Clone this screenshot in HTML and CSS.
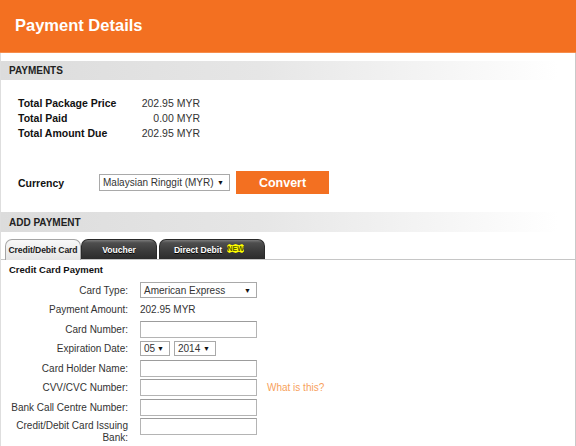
FILE: index.html
```html
<!DOCTYPE html>
<html>
<head>
<meta charset="utf-8">
<title>Payment Details</title>
<link rel="stylesheet" href="styles.css">
</head>
<body>
<div class="page">
  <header class="hdr"><h1>Payment Details</h1></header>
  <div class="main">
    <div class="bar">PAYMENTS</div>
    <div class="totals">
      <div class="trow"><span class="tl">Total Package Price</span><span class="tv">202.95 MYR</span></div>
      <div class="trow"><span class="tl">Total Paid</span><span class="tv">0.00 MYR</span></div>
      <div class="trow"><span class="tl">Total Amount Due</span><span class="tv">202.95 MYR</span></div>
    </div>
    <div class="currency">
      <span class="cl">Currency</span>
      <div class="sel sel-cur"><span>Malaysian Ringgit (MYR)</span><span class="arr">&#9660;</span></div>
      <button class="convert">Convert</button>
    </div>
    <div class="bar bar-add">ADD PAYMENT</div>
    <div class="tabs">
      <div class="tab tab-active">Credit/Debit Card</div>
      <div class="tab tab-dark tab-voucher">Voucher</div>
      <div class="tab tab-dark tab-dd">Direct Debit <span class="new">NEW</span></div>
    </div>
    <div class="ccp">Credit Card Payment</div>
    <div class="form">
      <div class="lbl">Card Type:</div>
      <div class="sel sel-type"><span>American Express</span><span class="arr">&#9660;</span></div>
      <div></div>

      <div class="lbl">Payment Amount:</div>
      <div class="val">202.95 MYR</div>
      <div></div>

      <div class="lbl">Card Number:</div>
      <div class="inp"></div>
      <div></div>

      <div class="lbl">Expiration Date:</div>
      <div class="exp">
        <div class="sel sel-mm"><span>05</span><span class="arr">&#9660;</span></div>
        <div class="sel sel-yy"><span>2014</span><span class="arr">&#9660;</span></div>
      </div>
      <div></div>

      <div class="lbl">Card Holder Name:</div>
      <div class="inp"></div>
      <div></div>

      <div class="lbl">CVV/CVC Number:</div>
      <div class="inp"></div>
      <div class="help">What is this?</div>

      <div class="lbl">Bank Call Centre Number:</div>
      <div class="inp"></div>
      <div></div>

      <div class="lbl lbl-two">Credit/Debit Card Issuing<br>Bank:</div>
      <div class="inp inp-top"></div>
      <div></div>
    </div>
  </div>
</div>
</body>
</html>
```
FILE: styles.css
```css
html, body {
  margin: 0;
  padding: 0;
  background: #fff;
}
body {
  font-family: "Liberation Sans", Arial, sans-serif;
  color: #333;
}
.page {
  width: 576px;
  height: 446px;
  overflow: hidden;
}
.hdr {
  box-sizing: border-box;
  height: 53px;
  background: #f37021;
  border-bottom: 1px solid #f68d4c;
  display: flex;
  align-items: center;
  padding-left: 15px;
  padding-bottom: 1px;
}
.hdr h1 {
  margin: 0;
  font-size: 16.5px;
  font-weight: bold;
  color: #fff;
}
.main {
  border-left: 1px solid #dedede;
  border-right: 1px solid #c9c9c9;
  padding-top: 8px;
  min-height: 400px;
}
.bar {
  height: 19px;
  line-height: 20px;
  padding-left: 8px;
  font-size: 10px;
  font-weight: bold;
  color: #222;
  background: linear-gradient(to right, #dcdcdc 0%, #e6e6e6 45%, #ffffff 97%);
}
.bar-add {
  height: 20px;
  line-height: 21px;
  margin-top: 18px;
}
.totals {
  padding: 16px 0 0 17px;
}
.trow {
  display: flex;
  height: 15px;
  line-height: 15px;
  font-size: 10.5px;
  white-space: nowrap;
}
.tl {
  flex: 0 0 123px;
  font-weight: bold;
  color: #111;
}
.tv {
  flex: 0 0 59px;
  text-align: right;
  color: #333;
}
.currency {
  display: flex;
  align-items: center;
  height: 23px;
  margin-top: 30px;
  padding-left: 17px;
}
.cl {
  flex: 0 0 81px;
  font-size: 10.5px;
  font-weight: bold;
  color: #111;
}
.sel {
  box-sizing: border-box;
  display: flex;
  align-items: center;
  justify-content: space-between;
  border: 1px solid #a9a9a9;
  background: #fff;
  font-size: 10px;
  color: #333;
  padding: 0 5px 0 3px;
  white-space: nowrap;
}
.arr {
  font-size: 7px;
  color: #111;
}
.sel-cur {
  width: 131px;
  height: 17px;
}
.convert {
  width: 93px;
  height: 23px;
  margin-left: 6px;
  border: none;
  background: #f37021;
  color: #fff;
  font-family: "Liberation Sans", Arial, sans-serif;
  font-size: 12.5px;
  font-weight: bold;
  padding: 0;
}
.tabs {
  display: flex;
  align-items: flex-end;
  height: 20px;
  margin-top: 7px;
  padding-left: 4px;
  border-bottom: 1px solid #c6c6c6;
}
.tab {
  box-sizing: border-box;
  height: 20px;
  display: flex;
  align-items: center;
  justify-content: center;
  font-size: 8.6px;
  font-weight: bold;
  border-radius: 7px 7px 0 0;
  white-space: nowrap;
  padding: 0;
}
.tab-active {
  width: 76px;
  height: 21px;
  margin-bottom: -1px;
  background: linear-gradient(#f8f8f8, #e4e4e4);
  border: 1px solid #a5a5a5;
  border-bottom: none;
  color: #222;
  letter-spacing: -0.1px;
}
.tab-dark {
  background: linear-gradient(#7a7a7a 0%, #4e4e4e 15%, #3a3a3a 60%, #2c2c2c 100%);
  border: 1px solid #2a2a2a;
  border-bottom: none;
  color: #fff;
  text-shadow: 0 1px 0 #000;
}
.tab-voucher {
  width: 76px;
}
.tab-dd {
  width: 106px;
  margin-left: 2px;
  padding-right: 6px;
}
.new {
  display: inline-block;
  margin-left: 5px;
  width: 17px;
  height: 9px;
  line-height: 9px;
  font-size: 7px;
  font-weight: bold;
  text-align: center;
  color: #5a5a00;
  text-shadow: none;
  background: #ffff00;
  position: relative;
  top: -1px;
  clip-path: polygon(0 20%, 12% 0, 30% 15%, 50% 0, 70% 15%, 88% 0, 100% 20%, 94% 50%, 100% 80%, 88% 100%, 70% 85%, 50% 100%, 30% 85%, 12% 100%, 0 80%, 6% 50%);
}
.ccp {
  margin-top: 2.5px;
  padding-left: 8px;
  font-size: 9.5px;
  font-weight: bold;
  line-height: 13px;
  color: #111;
}
.form {
  display: grid;
  grid-template-columns: 127px 117px auto;
  column-gap: 12px;
  row-gap: 2.5px;
  align-items: center;
  margin-top: 6px;
}
.lbl {
  text-align: right;
  font-size: 10px;
  line-height: 17px;
  color: #333;
  white-space: nowrap;
}
.lbl-two {
  line-height: 12px;
  padding-top: 2px;
  align-self: start;
}
.val {
  font-size: 10px;
  color: #333;
  line-height: 17px;
  white-space: nowrap;
}
.inp {
  box-sizing: border-box;
  width: 117px;
  height: 17px;
  border: 1px solid #b4b4b4;
  border-top-color: #9c9c9c;
  background: #fff;
}
.inp-top {
  align-self: start;
}
.sel-type {
  width: 117px;
  height: 16px;
}
.exp {
  display: flex;
  gap: 4px;
}
.sel-mm {
  width: 30px;
  height: 15px;
}
.sel-yy {
  width: 42px;
  height: 15px;
}
.help {
  margin-left: -2px;
  font-size: 10px;
  color: #f7a15c;
  white-space: nowrap;
}
```
